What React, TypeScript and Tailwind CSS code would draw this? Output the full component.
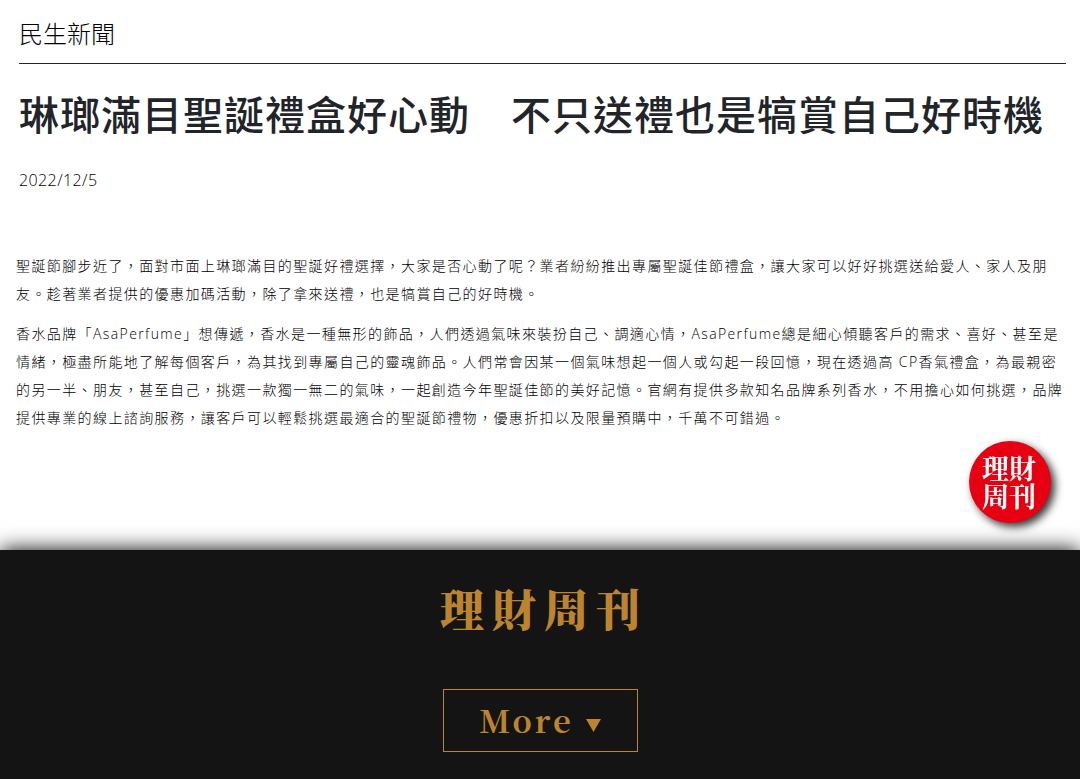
import React from 'react';

const paragraphs = [
  '聖誕節腳步近了，面對市面上琳瑯滿目的聖誕好禮選擇，大家是否心動了呢？業者紛紛推出專屬聖誕佳節禮盒，讓大家可以好好挑選送給愛人、家人及朋友。趁著業者提供的優惠加碼活動，除了拿來送禮，也是犒賞自己的好時機。',
  '香水品牌「AsaPerfume」想傳遞，香水是一種無形的飾品，人們透過氣味來裝扮自己、調適心情，AsaPerfume總是細心傾聽客戶的需求、喜好、甚至是情緒，極盡所能地了解每個客戶，為其找到專屬自己的靈魂飾品。人們常會因某一個氣味想起一個人或勾起一段回憶，現在透過高 CP香氣禮盒，為最親密的另一半、朋友，甚至自己，挑選一款獨一無二的氣味，一起創造今年聖誕佳節的美好記憶。官網有提供多款知名品牌系列香水，不用擔心如何挑選，品牌提供專業的線上諮詢服務，讓客戶可以輕鬆挑選最適合的聖誕節禮物，優惠折扣以及限量預購中，千萬不可錯過。',
];

function Article() {
  return (
    <article className="pb-[118px]">
      <header className="pr-[14px] pl-[19px]">
        <p className="border-b border-[#212529] pt-4 pb-3 text-2xl leading-[35px] font-light text-black">民生新聞</p>
        <h1 className="pt-[27px] text-[40px] leading-[48px] font-medium tracking-wide">
          琳瑯滿目聖誕禮盒好心動　不只送禮也是犒賞自己好時機
        </h1>
        <time dateTime="2022-12-05" className="mt-[29px] block text-base leading-6 font-light tracking-wide text-black">
          2022/12/5
        </time>
      </header>
      <div className="mt-[60px] flex flex-col gap-3 pr-3 pl-4 text-sm leading-7 font-light tracking-widest text-black">
        {paragraphs.map((text) => (
          <p key={text}>{text}</p>
        ))}
      </div>
    </article>
  );
}

function FloatingLogo() {
  return (
    <a
      href="#top"
      className="fixed right-[29px] bottom-64 z-10 flex size-[82px] items-center justify-center rounded-full bg-[#e60012] font-['Noto_Serif_CJK_TC','Noto_Sans_CJK_TC',serif] text-[27px] leading-7 font-bold text-white shadow-[4px_4px_8px_rgba(0,0,0,0.8)]"
    >
      <span className="w-14 break-all">理財周刊</span>
    </a>
  );
}

function Footer() {
  return (
    <footer className="flex grow flex-col items-center bg-[#141414] pt-7 pb-7 font-['Noto_Serif_CJK_TC','Liberation_Serif','Noto_Sans_CJK_TC',serif] font-bold text-[#bd842f] shadow-[0_0_20px_#000]">
      <h2 className="pl-2 text-[44px] leading-[60px] font-black tracking-[8px]">理財周刊</h2>
      <button
        type="button"
        className="mt-[51px] flex h-[63px] w-[195px] items-center justify-center gap-3 border border-[#bd842f] text-[31px] tracking-widest"
      >
        More
        <svg viewBox="0 0 15 13" className="mt-2.5 h-[13px] w-[15px]" fill="currentColor" aria-hidden="true">
          <path d="M0 0h15L7.500 13z" />
        </svg>
      </button>
    </footer>
  );
}

export default function App() {
  return (
    <div
      id="top"
      className="flex min-h-screen flex-col overflow-hidden bg-white font-['Open_Sans','Noto_Sans_CJK_TC',sans-serif] text-[#212529]"
    >
      <Article />
      <FloatingLogo />
      <Footer />
    </div>
  );
}
